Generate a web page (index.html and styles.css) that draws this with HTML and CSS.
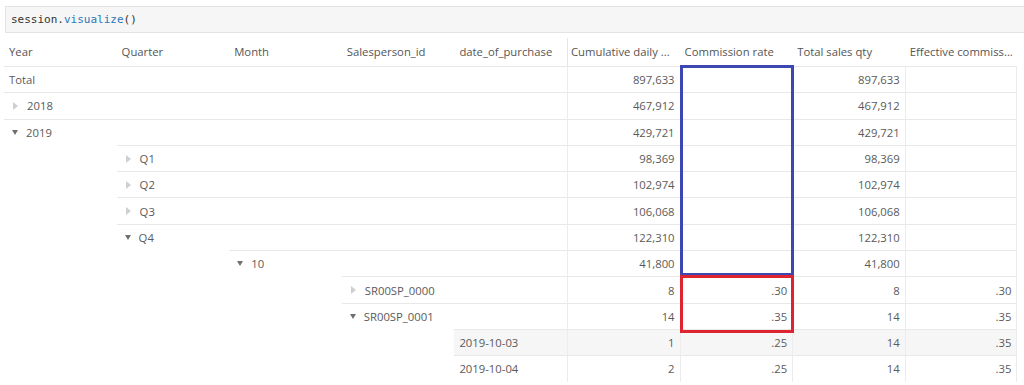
FILE: index.html
```html
<!DOCTYPE html>
<html>
<head>
<meta charset="utf-8">
<link rel="stylesheet" href="styles.css">
</head>
<body>
<div class="code">session.<span class="fn">visualize</span>()</div>
<div class="pivot">
  <div class="row hdr">
    <div class="h">Year</div>
    <div class="h">Quarter</div>
    <div class="h">Month</div>
    <div class="h">Salesperson_id</div>
    <div class="h">date_of_purchase</div>
    <div class="h vl">Cumulative daily ...</div>
    <div class="h">Commission rate</div>
    <div class="h">Total sales qty</div>
    <div class="h">Effective commiss...</div>
  </div>

  <div class="row">
    <div class="lbl l0 plain">Total</div>
    <div class="v">897,633</div><div class="v"></div><div class="v">897,633</div><div class="v last"></div>
  </div>
  <div class="row">
    <div class="lbl l0"><i class="tri closed"></i>2018</div>
    <div class="v">467,912</div><div class="v"></div><div class="v">467,912</div><div class="v last"></div>
  </div>
  <div class="row">
    <div class="lbl l0"><i class="tri open"></i>2019</div>
    <div class="v">429,721</div><div class="v"></div><div class="v">429,721</div><div class="v last"></div>
  </div>
  <div class="row">
    <div class="lbl l1"><i class="tri closed"></i>Q1</div>
    <div class="v">98,369</div><div class="v"></div><div class="v">98,369</div><div class="v last"></div>
  </div>
  <div class="row">
    <div class="lbl l1"><i class="tri closed"></i>Q2</div>
    <div class="v">102,974</div><div class="v"></div><div class="v">102,974</div><div class="v last"></div>
  </div>
  <div class="row">
    <div class="lbl l1"><i class="tri closed"></i>Q3</div>
    <div class="v">106,068</div><div class="v"></div><div class="v">106,068</div><div class="v last"></div>
  </div>
  <div class="row">
    <div class="lbl l1"><i class="tri open"></i>Q4</div>
    <div class="v">122,310</div><div class="v"></div><div class="v">122,310</div><div class="v last"></div>
  </div>
  <div class="row">
    <div class="lbl l2"><i class="tri open"></i>10</div>
    <div class="v">41,800</div><div class="v"></div><div class="v">41,800</div><div class="v last"></div>
  </div>
  <div class="row">
    <div class="lbl l3"><i class="tri closed"></i>SR00SP_0000</div>
    <div class="v">8</div><div class="v">.30</div><div class="v">8</div><div class="v last">.30</div>
  </div>
  <div class="row">
    <div class="lbl l3"><i class="tri open"></i>SR00SP_0001</div>
    <div class="v">14</div><div class="v">.35</div><div class="v">14</div><div class="v last">.35</div>
  </div>
  <div class="row shade">
    <div class="lbl l4 plain">2019-10-03</div>
    <div class="v">1</div><div class="v">.25</div><div class="v">14</div><div class="v last">.35</div>
  </div>
  <div class="row">
    <div class="lbl l4 plain">2019-10-04</div>
    <div class="v">2</div><div class="v">.25</div><div class="v">14</div><div class="v last">.35</div>
  </div>

  <div class="mark blue"></div>
  <div class="mark red"></div>
</div>
</body>
</html>
```

FILE: styles.css
```css
html, body {
  margin: 0;
  padding: 0;
  background: #ffffff;
}
body {
  font-family: "Open Sans", "Noto Sans", sans-serif;
  font-size: 11.3px;
  color: #5a5a5a;
  overflow: hidden;
}
.code {
  margin: 6px 0 0 5px;
  height: 27px;
  box-sizing: border-box;
  background: #f6f6f6;
  border: 1px solid #e2e2e2;
  border-right: 0;
  padding-left: 5px;
  font-family: "DejaVu Sans Mono", "Liberation Mono", monospace;
  font-size: 11px;
  line-height: 25px;
  color: #333333;
}
.fn {
  color: #2f77b8;
}
.pivot {
  position: relative;
  margin: 5px 0 0 4px;
}
.row {
  display: grid;
  grid-template-columns: repeat(9, 112.6px);
  height: 26.3px;
}
.hdr {
  height: 28px;
}
.h {
  padding-left: 5px;
  line-height: 28px;
  white-space: nowrap;
  overflow: hidden;
  color: #555555;
}
.h.vl {
  border-left: 1px solid #e6e6e6;
  padding-left: 3px;
}
.lbl, .v {
  box-sizing: border-box;
  border-top: 1px solid #e8e8e8;
  display: flex;
  align-items: center;
  white-space: nowrap;
}
.lbl {
  padding-left: 8px;
  grid-column-end: 6;
}
.lbl.plain {
  padding-left: 5px;
}
.l0 { grid-column-start: 1; }
.l1 { grid-column-start: 2; }
.l2 { grid-column-start: 3; }
.l3 { grid-column-start: 4; }
.l4 { grid-column-start: 5; }
.v {
  justify-content: flex-end;
  padding-right: 5px;
  border-left: 1px solid #ececec;
}
.v.last {
  border-right: 1px solid #ececec;
}
.shade .lbl, .shade .v {
  background: #f6f6f6;
}
.tri {
  display: inline-block;
  width: 0;
  height: 0;
  margin-right: 9px;
}
.tri.closed {
  border-top: 4px solid transparent;
  border-bottom: 4px solid transparent;
  border-left: 5px solid #cfcfcf;
  margin-left: 1px;
  margin-right: 9px;
}
.tri.open {
  border-left: 3.5px solid transparent;
  border-right: 3.5px solid transparent;
  border-top: 5px solid #707070;
  margin-right: 8px;
}
.mark {
  position: absolute;
  box-sizing: border-box;
  left: 676px;
  width: 114px;
  border: 3px solid;
}
.blue {
  top: 27px;
  height: 211px;
  border-color: #3d47b3;
}
.red {
  top: 237px;
  height: 58px;
  border-color: #dd2430;
}
```
